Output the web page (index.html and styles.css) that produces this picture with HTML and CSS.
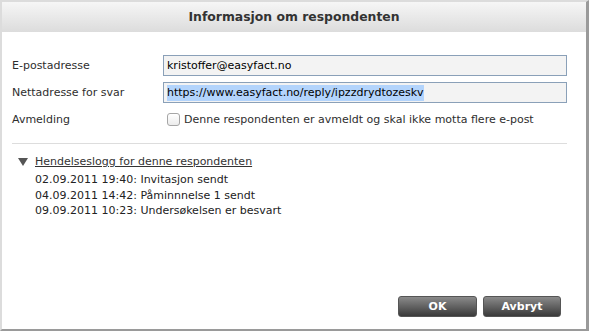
FILE: index.html
```html
<!DOCTYPE html>
<html lang="no">
<head>
    <meta charset="UTF-8">
    <title>Informasjon om respondenten</title>
    <link rel="stylesheet" href="styles.css">
</head>
<body>
    <div class="dialog">
        <div class="dialog-header">Informasjon om respondenten</div>

        <div class="dialog-body">
            <div class="form">
                <label class="label">E-postadresse</label>
                <div class="field">kristoffer@easyfact.no</div>

                <label class="label">Nettadresse for svar</label>
                <div class="field"><span class="selected">https://www.easyfact.no/reply/ipzzdrydtozeskv</span></div>

                <label class="label">Avmelding</label>
                <div class="check-row">
                    <span class="checkbox"></span>
                    <span>Denne respondenten er avmeldt og skal ikke motta flere e-post</span>
                </div>
            </div>

            <hr class="divider">

            <div class="log">
                <div class="log-toggle">
                    <span class="triangle"></span>
                    <a href="#" class="log-link">Hendelseslogg for denne respondenten</a>
                </div>
                <ul class="log-list">
                    <li>02.09.2011 19:40: Invitasjon sendt</li>
                    <li>04.09.2011 14:42: Påminnnelse 1 sendt</li>
                    <li>09.09.2011 10:23: Undersøkelsen er besvart</li>
                </ul>
            </div>
        </div>

        <div class="dialog-buttons">
            <button class="btn btn-ok">OK</button>
            <button class="btn btn-cancel">Avbryt</button>
        </div>
    </div>
</body>
</html>
```

FILE: styles.css
```css
body {
    margin: 0;
    font-family: "DejaVu Sans", Verdana, sans-serif;
    font-size: 11px;
    color: #2e2e2e;
    background: #fff;
}
.dialog {
    width: 589px;
    height: 331px;
    box-sizing: border-box;
    border-top: 2px solid #dcdcdc;
    border-left: 2px solid #dcdcdc;
    border-right: 3px solid #9a9a9a;
    border-bottom: 2px solid #9a9a9a;
    display: flex;
    flex-direction: column;
    background: #fff;
}
.dialog-header {
    height: 30px;
    line-height: 30px;
    text-align: center;
    font-weight: bold;
    font-size: 12.4px;
    color: #333;
    background: linear-gradient(#f6f6f6, #dcdcdc);
}
.dialog-body {
    flex: 1;
    padding: 23px 19px 0 10px;
}
.form {
    display: grid;
    grid-template-columns: 151px 1fr;
    grid-auto-rows: 21px;
    row-gap: 6px;
    align-items: center;
}
.field {
    height: 21px;
    box-sizing: border-box;
    border: 1px solid #8aa0b8;
    background: #f3f3f3;
    color: #000;
    padding: 0 3px;
    line-height: 19px;
    white-space: nowrap;
}
.selected {
    background: #b3d4fc;
    padding: 1px 0 2px;
}
.check-row {
    display: flex;
    align-items: center;
    gap: 4px;
    padding-left: 4px;
}
.checkbox {
    width: 11px;
    height: 11px;
    border: 1px solid #a6a6a6;
    border-radius: 3px;
    background: linear-gradient(#fff, #ececec);
}
.divider {
    border: 0;
    border-top: 1px solid #ddd;
    margin: 13px 0 0;
}
.log {
    padding: 11px 0 0 6px;
}
.log-toggle {
    display: flex;
    align-items: center;
    gap: 7px;
}
.triangle {
    width: 0;
    height: 0;
    border-left: 5px solid transparent;
    border-right: 5px solid transparent;
    border-top: 8px solid #555;
    margin-top: 1px;
}
.log-link {
    color: #333;
    text-decoration: underline;
}
.log-list {
    list-style: none;
    margin: 4px 0 0;
    padding: 0 0 0 17px;
    color: #222;
    line-height: 15.5px;
}
.dialog-buttons {
    display: flex;
    justify-content: flex-end;
    gap: 6px;
    padding: 0 25px 12px 0;
}
.btn {
    height: 21px;
    border: 1px solid #555;
    border-radius: 3px;
    background: linear-gradient(#8a8a8a, #3a3a3a);
    color: #fff;
    font-family: "DejaVu Sans", Verdana, sans-serif;
    font-weight: bold;
    font-size: 11px;
    padding: 0;
}
.btn-ok {
    width: 79px;
}
.btn-cancel {
    width: 78px;
}
```
